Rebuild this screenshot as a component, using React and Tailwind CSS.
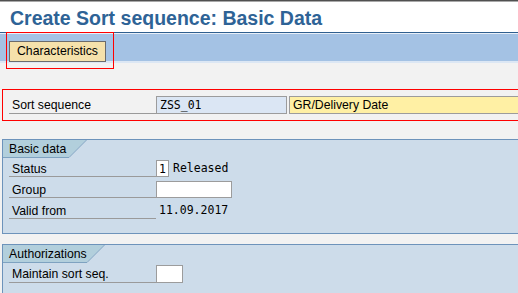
import React from 'react';

const mono = "font-['DejaVu_Sans_Mono',monospace] text-[11.5px]";

const Tab = ({ label, w, slant }) => (
  <div className={`relative h-[18px] ${w}`}>
    <svg className="absolute inset-0 h-full w-full" viewBox={`0 0 ${slant + 18} 18`} preserveAspectRatio="none">
      <polygon points={`0,0 ${slant + 17},0 ${slant},17 0,17`} fill="#b2cfdc" />
      <polyline points={`0,17.5 ${slant},17.5 ${slant + 17.5},0`} fill="none" stroke="#7ea2c0" strokeWidth="1" />
    </svg>
    <div className="relative pl-[6px] text-[12.25px] leading-[18px]">{label}</div>
  </div>
);

const Label = ({ children }) => (
  <div className="w-[147px] h-[17px] border-b border-[#9a9a9a] pl-[3px] text-[12.25px] leading-[19px]">{children}</div>
);

const App = () => {
  return (
    <div className="relative w-[518px] h-[293px] overflow-hidden bg-[#f2f2f2] font-['Liberation_Sans',Arial,sans-serif] text-black">
      {/* window edge */}
      <div className="h-px bg-[#505050]" />
      <div className="h-px bg-[#a8a8a8]" />

      {/* title */}
      <div className="h-[30px] bg-white pl-[10px] pt-[6px]">
        <h1 className="text-[19.5px] font-bold leading-[20px] text-[#2e6396]">Create Sort sequence: Basic Data</h1>
      </div>
      <div className="h-px bg-[#2f5f8f]" />
      <div className="h-px bg-[#e8eff8]" />

      {/* application toolbar */}
      <div className="h-[27px] bg-[#a4c2e4] pl-[9px] pt-[4px]">
        <button className="w-[97px] h-[21px] border border-[#6b6b6b] bg-[#f5e1ab] text-[12.25px] leading-[19px]">
          Characteristics
        </button>
      </div>
      <div className="h-[2px] bg-[#dce7f4]" />

      {/* highlight around toolbar button */}
      <div className="absolute left-[6px] top-[32px] w-[108px] h-[37px] border border-[#ff0000]" />

      {/* key fields */}
      <div className="mt-[26px] ml-[2px] border border-r-0 border-[#ff0000] pt-[6px] pb-[6px] pl-[6px] flex items-start">
        <div className="w-[147px] h-[18px] border-b border-[#9a9a9a] pl-[3px] text-[12.25px] leading-[19px]">Sort sequence</div>
        <div className={`w-[131px] h-[18px] border border-[#9c9c9c] bg-[#dbe6f4] pl-[3px] leading-[17px] ${mono}`}>ZSS_01</div>
        <div className="ml-[2px] flex-1 h-[18px] border border-r-0 border-[#9c9c9c] bg-[#fff0a4] pl-[3px] text-[12.25px] leading-[17px]">
          GR/Delivery Date
        </div>
      </div>

      {/* Basic data */}
      <div className="mt-[18px] ml-[2px] border border-r-0 border-[#6d93bb] bg-[#cddcea] pb-[14px]">
        <Tab label="Basic data" w="w-[84px]" slant={66} />
        <div className="mt-[2px] pl-[6px] flex flex-col gap-[4px]">
          <div className="flex items-start h-[17px]">
            <Label>Status</Label>
            <div className={`w-[13px] h-[17px] border border-[#9c9c9c] bg-white text-center leading-[16px] ${mono}`}>1</div>
            <div className={`ml-[4px] leading-[17px] ${mono}`}>Released</div>
          </div>
          <div className="flex items-start h-[17px]">
            <Label>Group</Label>
            <div className="w-[76px] h-[17px] border border-[#9c9c9c] bg-white" />
          </div>
          <div className="flex items-start h-[17px]">
            <Label>Valid from</Label>
            <div className={`ml-[3px] leading-[17px] ${mono}`}>11.09.2017</div>
          </div>
        </div>
      </div>

      {/* Authorizations */}
      <div className="mt-[10px] ml-[2px] h-[80px] border-t border-l border-[#6d93bb] bg-[#cddcea]">
        <Tab label="Authorizations" w="w-[102px]" slant={84} />
        <div className="mt-[2px] pl-[6px] flex items-start h-[18px]">
          <div className="w-[147px] h-[18px] border-b border-[#9a9a9a] pl-[3px] text-[12.25px] leading-[19px]">Maintain sort seq.</div>
          <div className="w-[27px] h-[18px] border border-[#9c9c9c] bg-white" />
        </div>
      </div>
    </div>
  );
};

export default App;
